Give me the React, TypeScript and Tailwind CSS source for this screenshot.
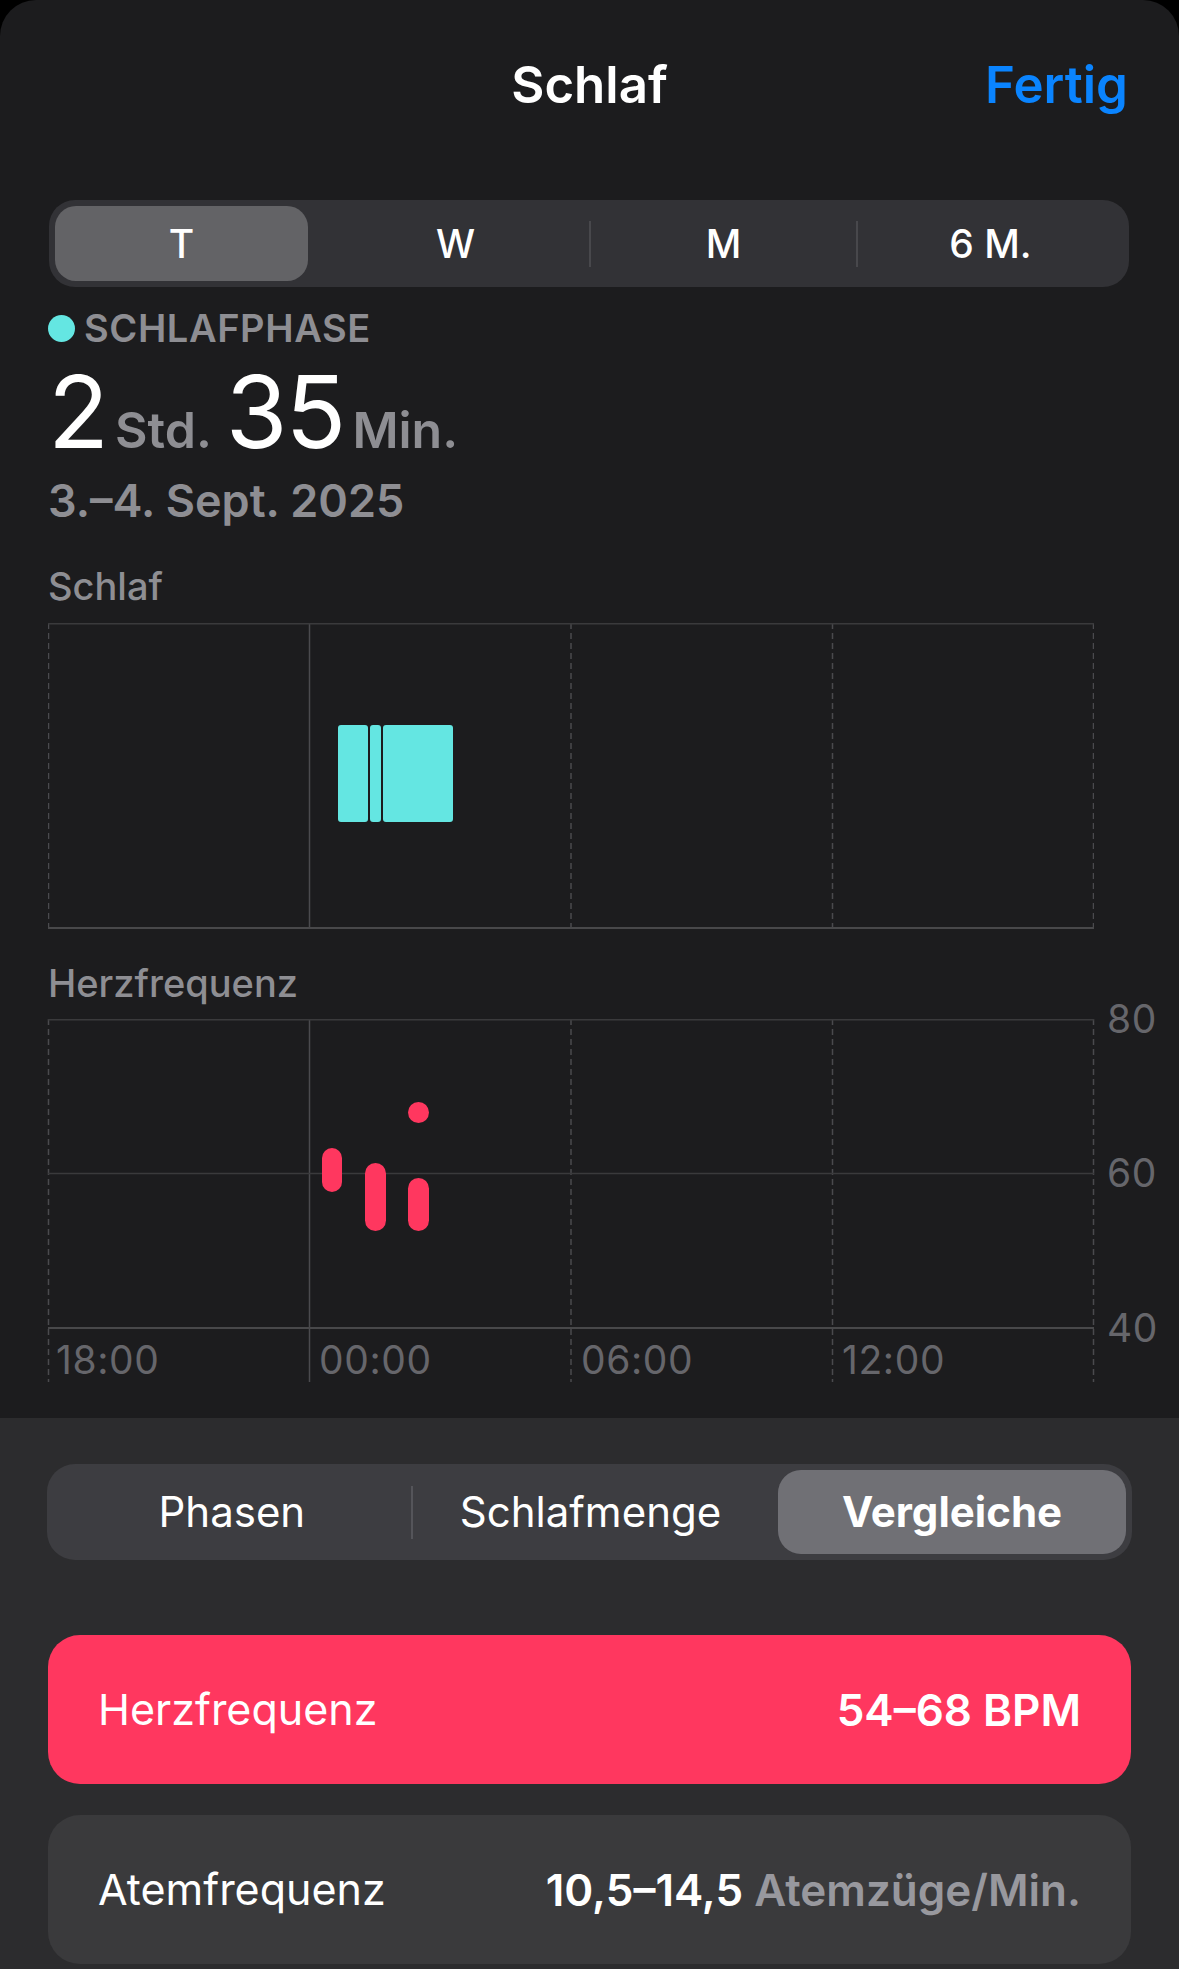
import React from "react";

const GRID = "#3a3a3c";
const GRID_V = "#4a4a4e";
const COLS = [0.5, 261.5, 523, 784.5, 1045.5];

function VLines({ height }: { height: number }) {
  return (
    <>
      {COLS.map((x, i) => (
        <line
          key={i}
          x1={x}
          x2={x}
          y1={0}
          y2={height}
          stroke={GRID_V}
          strokeWidth={1.5}
          strokeDasharray={i === 1 ? undefined : "6 4"}
        />
      ))}
    </>
  );
}

function SleepChart() {
  return (
    <svg width={1046} height={306} className="block">
      <VLines height={306} />
      <line x1={0} x2={1046} y1={0.75} y2={0.75} stroke={GRID} strokeWidth={1.5} />
      <line x1={0} x2={1046} y1={305} y2={305} stroke="#48484a" strokeWidth={2} />
      <rect x={290} y={102} width={30} height={97} rx={3} fill="#64e6e2" />
      <rect x={322} y={102} width={11} height={97} rx={3} fill="#64e6e2" />
      <rect x={335} y={102} width={70} height={97} rx={3} fill="#64e6e2" />
    </svg>
  );
}

function HeartChart() {
  const txt = { fontFamily: "Inter, sans-serif", fontSize: 39, fill: "#66666b", letterSpacing: 0.6 };
  return (
    <svg width={1131} height={363} className="block" style={{ overflow: "visible" }}>
      <VLines height={363} />
      <line x1={0} x2={1046} y1={0.75} y2={0.75} stroke={GRID} strokeWidth={1.5} />
      <line x1={0} x2={1046} y1={154.5} y2={154.5} stroke={GRID} strokeWidth={1.5} />
      <line x1={0} x2={1046} y1={309} y2={309} stroke="#48484a" strokeWidth={2} />
      <rect x={274} y={129} width={20} height={44} rx={10} fill="#ff375f" />
      <rect x={317} y={144} width={21} height={68} rx={10.5} fill="#ff375f" />
      <rect x={360} y={83} width={21} height={21} rx={10.5} fill="#ff375f" />
      <rect x={360} y={159} width={21} height={53} rx={10.5} fill="#ff375f" />
      <text x={1059} y={14} style={txt}>80</text>
      <text x={1059} y={168} style={txt}>60</text>
      <text x={1059} y={323} style={txt}>40</text>
      <text x={8} y={355} style={txt}>18:00</text>
      <text x={271} y={355} style={txt}>00:00</text>
      <text x={533} y={355} style={txt}>06:00</text>
      <text x={794} y={355} style={txt}>12:00</text>
    </svg>
  );
}

export default function App() {
  return (
    <div className="min-h-screen bg-black font-['Inter',sans-serif] text-white">
      <div className="rounded-t-[36px] overflow-hidden bg-[#1c1c1e]">
        {/* Top panel */}
        <div className="h-[1418px] px-[48px]">
          <div className="grid h-[168px] grid-cols-[1fr_auto_1fr] items-center">
            <div />
            <div className="text-[51px] font-semibold leading-none">Schlaf</div>
            <div className="mr-[3px] justify-self-end text-[51px] font-semibold leading-none text-[#0a84ff]">
              Fertig
            </div>
          </div>

          <div className="ml-[1px] mr-[2px] mt-[32px] flex h-[87px] rounded-[26px] bg-[#323236] p-[6px]">
            <div className="flex flex-1 items-center">
              <div className="flex h-full w-[253px] items-center justify-center rounded-[21px] bg-[#636366] text-[39px] font-medium leading-none">
                T
              </div>
            </div>
            <div className="flex flex-1 items-center justify-center text-[39px] font-medium leading-none">W</div>
            <div className="flex flex-1 items-center">
              <div className="h-[46px] w-[2px] bg-[#48484c]" />
              <div className="flex flex-1 items-center justify-center text-[39px] font-medium leading-none">M</div>
            </div>
            <div className="flex flex-1 items-center">
              <div className="h-[46px] w-[2px] bg-[#48484c]" />
              <div className="flex flex-1 items-center justify-center text-[39px] font-medium leading-none">6 M.</div>
            </div>
          </div>

          <div className="mt-[18px] flex h-[46px] items-center gap-[9px]">
            <div className="h-[27px] w-[27px] rounded-full bg-[#64e6e2]" />
            <div className="text-[38px] font-semibold leading-none tracking-[0.6px] text-[#8e8e93]">SCHLAFPHASE</div>
          </div>

          <div className="mt-[11px] flex h-[100px] items-baseline leading-none">
            <span className="text-[100px] font-normal tracking-[-2px]">2</span>
            <span className="ml-[8px] text-[50px] font-semibold text-[#8e8e93]">Std.</span>
            <span className="ml-[14px] text-[100px] font-normal tracking-[-2px]">35</span>
            <span className="ml-[8px] text-[50px] font-semibold text-[#8e8e93]">Min.</span>
          </div>

          <div className="mt-[16px] text-[45px] font-semibold leading-none text-[#8e8e93]">3.–4. Sept. 2025</div>

          <div className="mt-[44px] text-[38px] font-medium leading-none text-[#8e8e93]">Schlaf</div>

          <div className="mt-[18px]">
            <SleepChart />
          </div>

          <div className="mt-[35px] text-[38px] font-medium leading-none text-[#8e8e93]">Herzfrequenz</div>

          <div className="mt-[17px]">
            <HeartChart />
          </div>
        </div>

        {/* Bottom panel */}
        <div className="h-[551px] bg-[#2c2c2e] px-[48px] pt-[46px]">
          <div className="mr-[-1px] ml-[-1px] flex h-[96px] rounded-[28px] bg-[#3d3d41] p-[6px]">
            <div className="flex flex-1 items-center justify-center text-[42px] leading-none">Phasen</div>
            <div className="flex flex-1 items-center">
              <div className="h-[53px] w-[2px] bg-[#55555a]" />
              <div className="flex flex-1 items-center justify-center text-[42px] leading-none">Schlafmenge</div>
            </div>
            <div className="flex flex-1 items-center justify-end">
              <div className="flex h-full w-[348px] items-center justify-center rounded-[23px] bg-[#707075] text-[42px] font-bold leading-none">
                Vergleiche
              </div>
            </div>
          </div>

          <div className="mt-[75px] flex h-[149px] items-center justify-between rounded-[32px] bg-[#ff375f] px-[50px]">
            <div className="text-[43px] leading-none">Herzfrequenz</div>
            <div className="text-[44px] font-semibold leading-none">54–68 BPM</div>
          </div>

          <div className="mt-[31px] flex h-[149px] items-center justify-between rounded-[32px] bg-[#3a3a3c] px-[50px]">
            <div className="text-[43px] leading-none">Atemfrequenz</div>
            <div className="text-[44px] font-semibold leading-none">
              10,5–14,5 <span className="text-[#98989e]">Atemzüge/Min.</span>
            </div>
          </div>
        </div>
      </div>
    </div>
  );
}
